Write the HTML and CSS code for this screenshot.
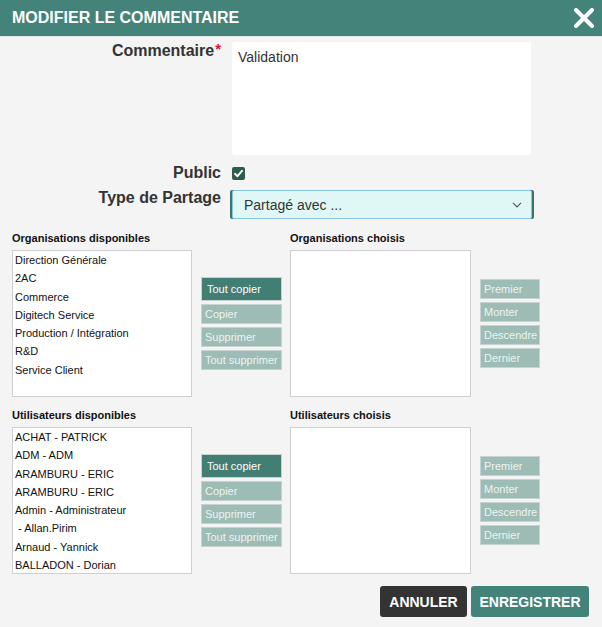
FILE: index.html
```html
<!DOCTYPE html>
<html lang="fr">
<head>
<meta charset="utf-8">
<title>Modifier le commentaire</title>
<link rel="stylesheet" href="styles.css">
</head>
<body>
<div class="dialog">
  <header class="head">
    <h1 class="title">MODIFIER LE COMMENTAIRE</h1>
    <button class="close" aria-label="Fermer">
      <svg width="22" height="20" viewBox="0 0 22 20"><path d="M3 2 L19 18 M19 2 L3 18" stroke="#fff" stroke-width="4" stroke-linecap="round" fill="none"/></svg>
    </button>
  </header>

  <div class="form">
    <label class="lbl">Commentaire<span class="req">*</span></label>
    <div class="textarea">Validation</div>

    <label class="lbl mid">Public</label>
    <div class="check-wrap"><span class="check"><svg width="13" height="13" viewBox="0 0 13 13"><path d="M3 6.8 L5.5 9.2 L10 3.8" stroke="#fff" stroke-width="1.9" fill="none" stroke-linecap="round" stroke-linejoin="round"/></svg></span></div>

    <label class="lbl">Type de Partage</label>
    <div class="select">
      <span>Partagé avec ...</span>
      <svg width="10" height="6" viewBox="0 0 10 6"><path d="M1 0.8 L5 4.8 L9 0.8" stroke="#555" stroke-width="1.2" fill="none"/></svg>
    </div>
  </div>

  <section class="dual">
    <h2 class="sec c1">Organisations disponibles</h2>
    <h2 class="sec c3">Organisations choisis</h2>
    <ul class="list">
      <li>Direction Générale</li>
      <li>2AC</li>
      <li>Commerce</li>
      <li>Digitech Service</li>
      <li>Production / Intégration</li>
      <li>R&amp;D</li>
      <li>Service Client</li>
    </ul>
    <div class="btns">
      <button class="b on">Tout copier</button>
      <button class="b off">Copier</button>
      <button class="b off">Supprimer</button>
      <button class="b off">Tout supprimer</button>
    </div>
    <ul class="list"></ul>
    <div class="btns order">
      <button class="b off">Premier</button>
      <button class="b off">Monter</button>
      <button class="b off">Descendre</button>
      <button class="b off">Dernier</button>
    </div>
  </section>

  <section class="dual second">
    <h2 class="sec c1">Utilisateurs disponibles</h2>
    <h2 class="sec c3">Utilisateurs choisis</h2>
    <ul class="list">
      <li>ACHAT - PATRICK</li>
      <li>ADM - ADM</li>
      <li>ARAMBURU - ERIC</li>
      <li>ARAMBURU - ERIC</li>
      <li>Admin - Administrateur</li>
      <li>&nbsp;- Allan.Pirim</li>
      <li>Arnaud - Yannick</li>
      <li>BALLADON - Dorian</li>
    </ul>
    <div class="btns">
      <button class="b on">Tout copier</button>
      <button class="b off">Copier</button>
      <button class="b off">Supprimer</button>
      <button class="b off">Tout supprimer</button>
    </div>
    <ul class="list"></ul>
    <div class="btns order">
      <button class="b off">Premier</button>
      <button class="b off">Monter</button>
      <button class="b off">Descendre</button>
      <button class="b off">Dernier</button>
    </div>
  </section>

  <footer class="foot">
    <button class="act cancel">ANNULER</button>
    <button class="act save">ENREGISTRER</button>
  </footer>
</div>
</body>
</html>
```

FILE: styles.css
```css
* { box-sizing: border-box; }
html, body { margin: 0; padding: 0; }
body {
  background: #f4f4f4;
  font-family: "Liberation Sans", Arial, sans-serif;
  color: #333;
  width: 602px;
  height: 627px;
  overflow: hidden;
}
.head {
  height: 37px;
  background: #44837a;
  display: flex;
  align-items: center;
  justify-content: space-between;
  padding: 0 7px 0 12px;
  border-bottom: 1px solid #e2e8e6;
}
.title {
  margin: 0;
  font-size: 16px;
  font-weight: bold;
  color: #fff;
}
.close {
  background: none;
  border: 0;
  padding: 0;
  width: 22px;
  height: 20px;
  display: block;
}
.close svg { display: block; }

.form {
  display: grid;
  grid-template-columns: 221px 300px;
  column-gap: 11px;
  row-gap: 11px;
  margin-top: 5px;
  align-items: start;
}
.lbl {
  text-align: right;
  font-size: 16px;
  font-weight: bold;
  line-height: 14px;
  color: #333;
  white-space: nowrap;
}
.lbl.mid { align-self: center; }
.req { color: #e0141e; font-size: 15px; vertical-align: 2px; margin-left: 1px; }
.textarea {
  width: 299px;
  height: 113px;
  background: #fff;
  border-radius: 3px;
  padding: 7px 6px;
  font-size: 14px;
  color: #333;
}
.check-wrap { height: 13px; margin-top: 1px; }
.check {
  display: block;
  width: 13px;
  height: 13px;
  background: #2e5b50;
  border-radius: 2px;
}
.check svg { display: block; }
.select {
  width: 300px;
  height: 29px;
  margin-top: -1px;
  background: #e0f8f5;
  border: 1px solid #86c3e6;
  border-radius: 2px;
  box-shadow: -2px 0 0 #3d7469, 2px 0 0 #3d7469;
  display: flex;
  align-items: center;
  justify-content: space-between;
  padding: 0 9px 0 11px;
  font-size: 14px;
  color: #333;
}

.dual {
  display: grid;
  grid-template-columns: 180px 98px 181px 69px;
  row-gap: 5px;
  margin: 12px 0 0 12px;
  align-items: center;
}
.dual.second { margin-top: 11px; }
.sec {
  margin: 0;
  font-size: 11px;
  font-weight: bold;
  line-height: 14px;
  color: #111;
}
.c1 { grid-column: 1 / 3; }
.c3 { grid-column: 3 / 5; }
.list {
  list-style: none;
  margin: 0;
  padding: 0 0 0 2px;
  height: 147px;
  background: #fff;
  border: 1px solid #cfcfd3;
  overflow: hidden;
  font-size: 11px;
  color: #111;
}
.list li { line-height: 18.3px; white-space: nowrap; }
.btns {
  display: flex;
  flex-direction: column;
  gap: 3px;
  margin-left: 9px;
  width: 81px;
}
.btns.order { width: 60px; }
.b {
  display: block;
  width: 100%;
  height: 20px;
  border: 1px solid #c6d3d0;
  font-family: inherit;
  font-size: 11px;
  text-align: left;
  padding: 0 3px;
  white-space: nowrap;
}
.b.on {
  height: 24px;
  background: #427e73;
  color: #fff;
  padding-left: 5px;
}
.b.off {
  background: #9cbcb5;
  color: #eef4f2;
}

.foot {
  display: flex;
  justify-content: flex-end;
  gap: 4px;
  padding: 12px 13px 0 0;
}
.act {
  height: 31px;
  border: 0;
  border-radius: 3px;
  color: #fff;
  font-family: inherit;
  font-size: 14px;
  font-weight: bold;
  padding: 0;
  text-align: center;
}
.cancel { background: #333; width: 87px; }
.save { background: #44837a; width: 118px; }
```
